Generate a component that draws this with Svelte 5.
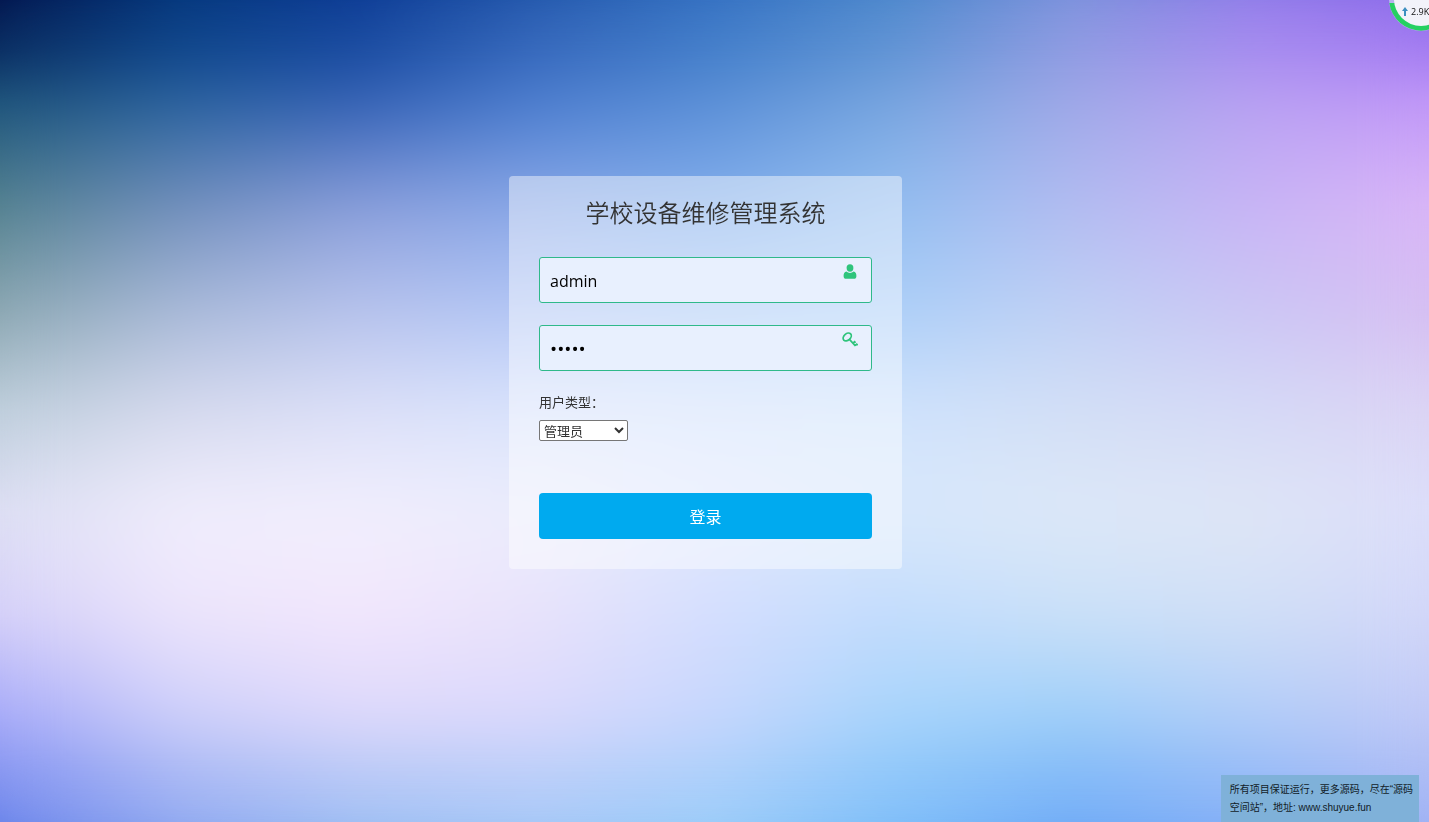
<script>
    let usuario = "admin";
    let clave = "admin";
    let tipo = "admin";

    // colores del fondo: cada fila va de izquierda a derecha
    const filas = [
        { y: 0, colores: ["#03164e", "#05377c", "#0d3b95", "#2358ac", "#3470c2", "#4c88cc", "#7a92dc", "#8e7ce8", "#8a68ea"] },
        { y: 6.25, colores: ["#0a2e62", "#10478c", "#1a4ca0", "#396abd", "#4580ca", "#6194d4", "#929ce2", "#a88cf0", "#a57cf2"] },
        { y: 12.5, colores: ["#1f567c", "#2b649f", "#3562b6", "#4c7ed0", "#5c90d8", "#78a6e0", "#9fa9e8", "#b9a2f2", "#c298f8"] },
        { y: 25, colores: ["#54828f", "#728fbc", "#8a9edb", "#8aa8e8", "#82aeec", "#93bef0", "#b2bcf1", "#c8b4f5", "#dab6f7"] },
        { y: 37.5, colores: ["#8aa6b0", "#a8b9d8", "#b6c2ec", "#b2c6f6", "#acccf6", "#accff8", "#bfd0f4", "#cbc6f4", "#d6bef2"] },
        { y: 50, colores: ["#bfcfdc", "#d6daee", "#dce0f8", "#dae4fc", "#d4e2fd", "#d0e3fc", "#d3dff6", "#d5daf6", "#dcd4f4"] },
        { y: 62.5, colores: ["#dedff4", "#f1eefd", "#f2effd", "#ecedfc", "#e0e8fd", "#d8e8fb", "#dde8f8", "#dfe6f6", "#dcdefa"] },
        { y: 75, colores: ["#d4cff8", "#ece4fb", "#f2e6fc", "#e8e2fb", "#d4defe", "#c2dcfd", "#cae0f8", "#d0dff7", "#d2d6f8"] },
        { y: 87.5, colores: ["#a4a8f8", "#cccefa", "#ddd8fb", "#dad8fc", "#c6d6fd", "#a6d4fb", "#9ccef9", "#b0ccf8", "#c0c8f6"] },
        { y: 100, colores: ["#6a84ea", "#8ca6ef", "#9abcf2", "#a2c6f6", "#98cbf8", "#7cbcf8", "#6ea9f6", "#82adf6", "#a0b2f4"] }
    ];

    function estiloFila(i) {
        const fondo = `background:linear-gradient(to right, ${filas[i].colores.join(", ")});`;
        if (i === 0) return fondo;
        return fondo + `mask-image:linear-gradient(to bottom, transparent ${filas[i - 1].y}%, #000 ${filas[i].y}%);`;
    }

    function entrar(event) {
        event.preventDefault();
        console.log("login", usuario, tipo);
    }
</script>

<div class="page">
    <div class="fondo">
        {#each filas as fila, i}
            <div class="fila" style={estiloFila(i)}></div>
        {/each}
        <div class="suave"></div>
    </div>

    <form class="login" on:submit={entrar}>
        <h1>学校设备维修管理系统</h1>

        <div class="campo">
            <input type="text" aria-label="用户名" bind:value={usuario}>
            <svg class="icono" viewBox="0 0 16 16" aria-hidden="true">
                <ellipse cx="8" cy="4" rx="3.4" ry="3.7" />
                <path d="M4.4 7.6C2.4 8 1.6 9.6 1.6 12c0 1.9.8 2.8 2.2 2.8h8.4c1.4 0 2.2-.9 2.2-2.8 0-2.4-.8-4-2.8-4.4C10.6 8.5 9.4 9 8 9s-2.6-.5-3.6-1.4z" />
            </svg>
        </div>

        <div class="campo">
            <input type="password" aria-label="密码" bind:value={clave}>
            <svg class="icono linea" viewBox="0 0 16 16" aria-hidden="true">
                <ellipse cx="5.2" cy="5" rx="4.6" ry="3.3" transform="rotate(-42 5.2 5)" />
                <path d="M7.2 7.2L13.4 13.8M11 11.2l1.600-1.500 1 1.100M13.200 13.600l1.500-1.400 1 1.100" />
            </svg>
        </div>

        <label for="tipo">用户类型：</label>
        <select id="tipo" bind:value={tipo}>
            <option value="admin">管理员</option>
        </select>

        <button type="submit">登录</button>
    </form>

    <div class="velocidad">
        <svg viewBox="0 0 64 64" aria-hidden="true">
            <circle cx="32" cy="32" r="32" fill="#b6b2ee" />
            <path d="M.3 36A32 32 0 0 0 63.7 36z" fill="#25d062" />
            <circle cx="32" cy="32" r="27" fill="#f2f3fa" />
            <path d="M16 40l3 4h-2v5h-2v-5h-2z" fill="#3d8fc0" />
        </svg>
        <span>2.9K</span>
    </div>

    <p class="aviso">所有项目保证运行，更多源码，尽在“源码<br>空间站”，地址: www.shuyue.fun</p>
</div>

<style>

:global(body){
    margin:0;
}

*{
    box-sizing:border-box;
}

.page{
    position:relative;
    min-height:100vh;
    padding:176px 18px 0 0;
    overflow:hidden;
    font-family:"Open Sans", "Noto Sans CJK SC", sans-serif;
    color:#333;
}

/* Fondo */
.fondo, .fila, .suave{
    position:absolute;
    inset:0;
}

.suave{
    backdrop-filter:blur(30px);
}

/* Formulario */
.login{
    position:relative;
    max-width:393px;
    margin:0 auto;
    padding:16px 30px 30px;
    background:rgba(255,255,255,0.45);
    border-radius:4px;
}

h1{
    margin:0 0 23px;
    font-size:24px;
    line-height:42px;
    font-weight:350;
    text-align:center;
}

.campo{
    position:relative;
    margin-bottom:22px;
}

.campo input{
    display:block;
    width:100%;
    height:46px;
    padding:2px 10px 0;
    border:1px solid #2fb98a;
    border-radius:3px;
    background:#e8f0fe;
    color:#000;
    font-family:inherit;
    font-size:16px;
    outline:none;
}

.campo input[type="password"]{
    font-size:19px;
}

.icono{
    position:absolute;
    top:7px;
    right:14px;
    width:16px;
    height:16px;
    fill:#2fc47c;
}

.linea{
    fill:none;
    stroke:#2fc47c;
    stroke-width:1.7;
}

label{
    display:block;
    margin-bottom:8px;
    font-size:13px;
    line-height:19px;
}

select{
    display:block;
    width:89px;
    height:21px;
    padding:0;
    border:1px solid #767676;
    border-radius:2px;
    background-color:#fff;
    color:#333;
    font-family:inherit;
    font-size:13px;
}

button{
    display:block;
    width:100%;
    height:46px;
    margin-top:52px;
    border:none;
    border-radius:4px;
    background:#00aaef;
    color:#fff;
    font-family:inherit;
    font-size:16px;
    cursor:pointer;
}

/* Velocidad de red */
.velocidad{
    position:absolute;
    top:-33px;
    right:-24px;
    width:64px;
    height:64px;
}

.velocidad svg{
    display:block;
}

.velocidad span{
    position:absolute;
    top:39px;
    left:22px;
    font-size:9px;
    line-height:12px;
    color:#111;
}

/* Aviso */
.aviso{
    position:absolute;
    right:10px;
    bottom:0;
    margin:0;
    padding:6px 6px 5px 9px;
    background:#7fb1d9;
    color:#111c28;
    font-family:"Liberation Sans", "Noto Sans CJK SC", sans-serif;
    font-size:10px;
    line-height:18px;
    white-space:nowrap;
}

</style>
